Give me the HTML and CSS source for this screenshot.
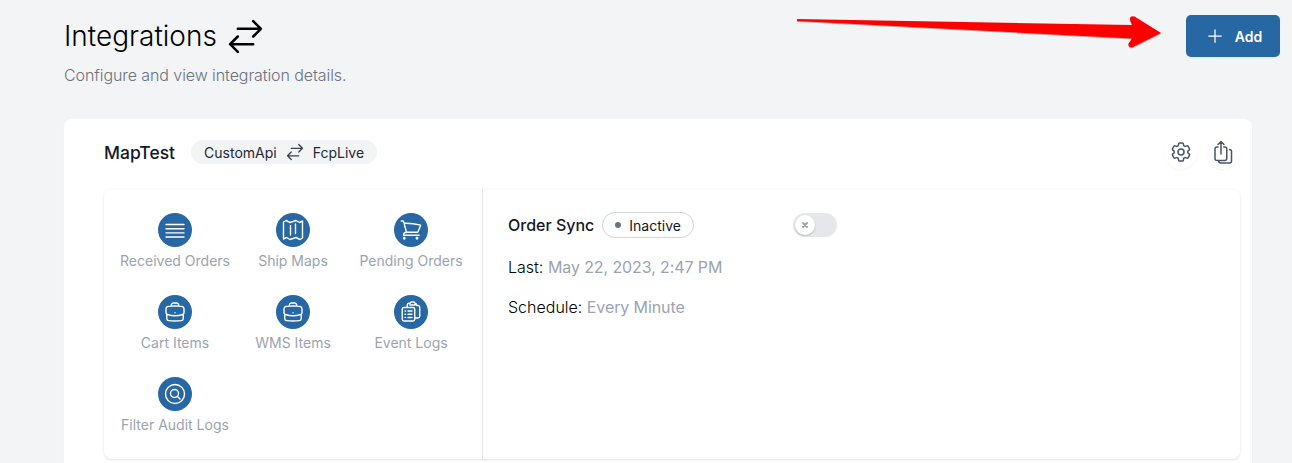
FILE: index.html
```html
<!DOCTYPE html>
<html lang="en">
<head>
  <meta charset="UTF-8">
  <title>Integrations</title>
  <link rel="stylesheet" href="styles.css">
</head>
<body>
  <header class="page-header">
    <div>
      <h1 class="page-title">Integrations
        <svg class="title-icon" viewBox="0 0 24 24" fill="none" stroke="currentColor" stroke-width="1.5" stroke-linecap="round" stroke-linejoin="round"><path d="M7.5 21 3 16.5m0 0L7.5 12M3 16.5h13.5m0-13.5L21 7.5m0 0L16.5 12M21 7.5H7.5"/></svg>
      </h1>
      <p class="page-sub">Configure and view integration details.</p>
    </div>
    <button class="add-btn">
      <svg viewBox="0 0 24 24" fill="none" stroke="currentColor" stroke-width="1.5" stroke-linecap="round"><path d="M12 4.5v15m7.5-7.5h-15"/></svg>
      Add
    </button>
  </header>

  <svg class="red-arrow" viewBox="0 0 370 40">
    <path d="M0 4 335 10 L333 5 Q332.500 0 337.500 1.500 L364 18 L336 32 Q331 33.500 331.500 28.500 L335 23.500 L0 6 Z" fill="#fe0000"/>
  </svg>

  <section class="card">
    <div class="card-head">
      <h2 class="card-title">MapTest</h2>
      <span class="flow-pill">CustomApi
        <svg viewBox="0 0 24 24" fill="none" stroke="currentColor" stroke-width="1.5" stroke-linecap="round" stroke-linejoin="round"><path d="M7.5 21 3 16.500m0 0L7.5 12M3 16.500h13.500m0-13.500L21 7.500m0 0L16.500 12M21 7.500H7.500"/></svg>
        FcpLive</span>
      <div class="card-actions">
        <button class="round-btn">
          <svg viewBox="0 0 24 24" fill="none" stroke="currentColor" stroke-width="1.5" stroke-linecap="round" stroke-linejoin="round"><path d="M9.594 3.940c.09-.542.560-.940 1.110-.940h2.593c.550 0 1.020.398 1.110.940l.213 1.281c.063.374.313.686.645.870.074.040.147.083.220.127.324.196.720.257 1.075.124l1.217-.456a1.125 1.125 0 0 1 1.370.490l1.296 2.247a1.125 1.125 0 0 1-.260 1.431l-1.003.827c-.293.240-.438.613-.431.992a6.759 6.759 0 0 1 0 .255c-.007.378.138.750.430.990l1.005.828c.424.350.534.954.260 1.430l-1.298 2.247a1.125 1.125 0 0 1-1.369.491l-1.217-.456c-.355-.133-.750-.072-1.076.124a6.570 6.570 0 0 1-.220.128c-.331.183-.581.495-.644.869l-.213 1.280c-.090.543-.560.941-1.110.941h-2.594c-.550 0-1.020-.398-1.110-.940l-.213-1.281c-.062-.374-.312-.686-.644-.870a6.520 6.520 0 0 1-.220-.127c-.325-.196-.720-.257-1.076-.124l-1.217.456a1.125 1.125 0 0 1-1.369-.490l-1.297-2.247a1.125 1.125 0 0 1 .260-1.431l1.004-.827c.292-.240.437-.613.430-.992a6.932 6.932 0 0 1 0-.255c.007-.378-.138-.750-.430-.990l-1.004-.828a1.125 1.125 0 0 1-.260-1.430l1.297-2.247a1.125 1.125 0 0 1 1.370-.491l1.216.456c.356.133.751.072 1.076-.124.072-.044.146-.087.220-.128.332-.183.582-.495.644-.869l.214-1.281Z"/><path d="M15 12a3 3 0 1 1-6 0 3 3 0 0 1 6 0Z"/></svg>
        </button>
        <button class="round-btn">
          <svg viewBox="0 0 24 24" fill="none" stroke="currentColor" stroke-width="1.5" stroke-linecap="round" stroke-linejoin="round"><path d="M7 7H6a2 2 0 0 0-2 2v9.500a2 2 0 0 0 2 2h7.750a2 2 0 0 0 2-2V9a2 2 0 0 0-2-2h-1M10 14V1.500m-3 3 3-3 3 3M18.500 9.500a2 2 0 0 1 2 2v9.500a2 2 0 0 1-2 2H10a2.500 2.500 0 0 1-2.500-2.500"/></svg>
        </button>
      </div>
    </div>

    <div class="panel">
      <nav class="tiles">
        <a class="tile"><span class="tile-icon"><svg viewBox="0 0 24 24"><path d="M3 6.500h18M3 10.700h18M3 14.900h18M3 19h18"/></svg></span>Received Orders</a>
        <a class="tile"><span class="tile-icon"><svg viewBox="0 0 24 24"><path d="M9 4.500 5 2.500 2.500 4v17l3-1.500 3.500 2 6-2 4 2 2.500-1.500V3l-3 1.500L15 2.500 9 4.500ZM9.500 7.500v9.500M14.500 6v9.500"/></svg></span>Ship Maps</a>
        <a class="tile"><span class="tile-icon"><svg viewBox="0 0 24 24"><path d="M2.250 3h1.386c.510 0 .955.343 1.087.835l.383 1.437M7.500 14.250a3 3 0 0 0-3 3h15.750m-12.750-3h11.218c1.121-2.300 2.100-4.684 2.924-7.138a60.114 60.114 0 0 0-16.536-1.840M7.500 14.250 5.106 5.272M6 20.250a.750.750 0 1 1-1.500 0 .750.750 0 0 1 1.500 0Zm12.750 0a.750.750 0 1 1-1.500 0 .750.750 0 0 1 1.500 0Z"/></svg></span>Pending Orders</a>
        <a class="tile"><span class="tile-icon"><svg viewBox="0 0 24 24"><path d="M20.250 14.150v4.250c0 1.094-.787 2.036-1.872 2.180-2.087.277-4.216.420-6.378.420s-4.291-.143-6.378-.420c-1.085-.144-1.872-1.086-1.872-2.180v-4.250m16.500 0a2.180 2.180 0 0 0 .750-1.661V8.706c0-1.081-.768-2.015-1.837-2.175a48.114 48.114 0 0 0-3.413-.387m4.500 8.006c-.194.165-.420.295-.673.380A23.978 23.978 0 0 1 12 15.750c-2.648 0-5.195-.429-7.577-1.220a2.016 2.016 0 0 1-.673-.380m0 0A2.180 2.180 0 0 1 3 12.489V8.706c0-1.081.768-2.015 1.837-2.175a48.111 48.111 0 0 1 3.413-.387m7.500 0V5.250A2.250 2.250 0 0 0 13.500 3h-3a2.250 2.250 0 0 0-2.250 2.250v.894m7.500 0a48.667 48.667 0 0 0-7.500 0M12 12.750h.008v.008H12v-.008Z"/></svg></span>Cart Items</a>
        <a class="tile"><span class="tile-icon"><svg viewBox="0 0 24 24"><path d="M20.250 14.150v4.250c0 1.094-.787 2.036-1.872 2.180-2.087.277-4.216.420-6.378.420s-4.291-.143-6.378-.420c-1.085-.144-1.872-1.086-1.872-2.180v-4.250m16.500 0a2.180 2.180 0 0 0 .750-1.661V8.706c0-1.081-.768-2.015-1.837-2.175a48.114 48.114 0 0 0-3.413-.387m4.500 8.006c-.194.165-.420.295-.673.380A23.978 23.978 0 0 1 12 15.750c-2.648 0-5.195-.429-7.577-1.220a2.016 2.016 0 0 1-.673-.380m0 0A2.180 2.180 0 0 1 3 12.489V8.706c0-1.081.768-2.015 1.837-2.175a48.111 48.111 0 0 1 3.413-.387m7.500 0V5.250A2.250 2.250 0 0 0 13.500 3h-3a2.250 2.250 0 0 0-2.250 2.250v.894m7.500 0a48.667 48.667 0 0 0-7.500 0M12 12.750h.008v.008H12v-.008Z"/></svg></span>WMS Items</a>
        <a class="tile"><span class="tile-icon"><svg viewBox="0 0 24 24"><path d="M8.250 7.500V4.900c0-.9.700-1.600 1.500-1.700l1.300-.1M16 3.100c.900.100 1.500.800 1.500 1.700V5.500h1.500c1 0 1.750.800 1.750 1.800v9c0 1-.750 1.700-1.750 1.700H16.500M11 3.500c0-.800.700-1.500 1.500-1.500h2c.800 0 1.500.700 1.500 1.500V5h-5V3.500ZM5 7.500h9c1 0 1.750.800 1.750 1.750v10c0 1-.750 1.750-1.750 1.750H5c-1 0-1.750-.750-1.750-1.750v-10C3.250 8.300 4 7.500 5 7.500ZM9 11h4M9 14.250h4M9 17.500h4M6 11h.500M6 14.250h.500M6 17.500h.500"/></svg></span>Event Logs</a>
        <a class="tile"><span class="tile-icon"><svg viewBox="0 0 24 24"><circle cx="12" cy="12" r="9.500"/><circle cx="11.500" cy="11.500" r="4"/><path d="m14.500 14.500 2.500 2.500"/></svg></span>Filter Audit Logs</a>
      </nav>

      <div class="sync">
        <div class="sync-head">
          <span class="sync-name">Order Sync</span>
          <span class="status-pill"><i class="status-dot"></i>Inactive</span>
          <span class="toggle"><span class="knob">
            <svg viewBox="0 0 12 12" fill="none" stroke="currentColor" stroke-width="2" stroke-linecap="round"><path d="M4 4l4 4M8 4l-4 4"/></svg>
          </span></span>
        </div>
        <p class="sync-line">Last: <span class="muted">May 22, 2023, 2:47 PM</span></p>
        <p class="sync-line">Schedule: <span class="muted">Every Minute</span></p>
      </div>
    </div>
  </section>
</body>
</html>
```

FILE: styles.css
```css
html, body {
  height: 100%;
  overflow: hidden;
}

body {
  margin: 0;
  background: #f3f4f6;
  color: #111827;
  font-family: Inter, "Liberation Sans", sans-serif;
  position: relative;
}

.page-header {
  display: flex;
  justify-content: space-between;
  align-items: flex-start;
  padding: 15px 12px 0 64px;
}

.page-title {
  display: flex;
  align-items: center;
  gap: 8px;
  margin: 0;
  height: 42px;
  font-size: 28px;
  font-weight: 300;
  color: #000;
}

.title-icon {
  width: 41px;
  height: 41px;
}

.page-sub {
  margin: 8px 0 0;
  font-size: 16px;
  line-height: 20px;
  font-weight: 300;
  letter-spacing: -0.08px;
  color: #6b7280;
}

.add-btn {
  display: flex;
  align-items: center;
  justify-content: center;
  gap: 9.500px;
  width: 94px;
  height: 42px;
  padding: 0 0 0 1.500px;
  border: none;
  border-radius: 5px;
  background: #2767a3;
  color: #fff;
  font-family: inherit;
  font-size: 14px;
  font-weight: 600;
  box-shadow: 0 1px 2px rgba(0, 0, 0, 0.05);
}

.add-btn svg {
  width: 20px;
  height: 20px;
}

.red-arrow {
  position: absolute;
  left: 797px;
  top: 15px;
  width: 370px;
  height: 40px;
  filter: drop-shadow(0 1px 0 rgba(90, 90, 90, 0.45));
}

.card {
  margin: 34px 40px 0 64px;
  padding: 20px 12px 40px 40px;
  background: #fff;
  border-radius: 8px;
  box-shadow: 0 1px 2px rgba(0, 0, 0, 0.04);
}

.card-head {
  display: flex;
  align-items: center;
  height: 26px;
}

.card-title {
  margin: 0 16px 0 0;
  font-size: 17.500px;
  font-weight: 500;
}

.flow-pill {
  display: flex;
  align-items: center;
  gap: 9px;
  height: 24px;
  padding: 0 13px;
  border-radius: 12px;
  background: #f3f4f6;
  color: #1f2937;
  font-size: 14px;
}

.flow-pill svg {
  width: 20px;
  height: 20px;
  margin: 0 -1px;
  color: #374151;
}

.card-actions {
  display: flex;
  gap: 8px;
  margin-left: auto;
}

.round-btn {
  display: flex;
  align-items: center;
  justify-content: center;
  width: 34px;
  height: 34px;
  padding: 0;
  border: none;
  border-radius: 50%;
  background: #fff;
  color: #4b5563;
  box-shadow: 0 1px 2px rgba(0, 0, 0, 0.04);
}

.round-btn svg {
  width: 24px;
  height: 24px;
}

.panel {
  display: flex;
  margin-top: 24px;
  height: 270px;
  border-radius: 8px;
  background: #fff;
  box-shadow: 0 1px 3px rgba(0, 0, 0, 0.12);
}

.tiles {
  display: grid;
  grid-template-columns: repeat(3, 118px);
  grid-auto-rows: 82px;
  box-sizing: border-box;
  width: 379px;
  padding: 24px 12px 0;
  border-right: 1px solid #e5e7eb;
}

.tile {
  display: flex;
  flex-direction: column;
  align-items: center;
  gap: 4px;
  color: #9ca3af;
  font-size: 14px;
  line-height: 20px;
  white-space: nowrap;
}

.tile-icon {
  display: flex;
  align-items: center;
  justify-content: center;
  width: 34px;
  height: 34px;
  border-radius: 50%;
  background: #2767a3;
}

.tile-icon svg {
  width: 24px;
  height: 24px;
  fill: none;
  stroke: #fff;
  stroke-width: 1.4;
  stroke-linecap: round;
  stroke-linejoin: round;
}

.sync {
  flex: 1;
  padding: 23px 25px;
}

.sync-head {
  display: flex;
  align-items: center;
  height: 26px;
}

.sync-name {
  font-size: 16px;
  font-weight: 500;
}

.status-pill {
  display: flex;
  align-items: center;
  gap: 8px;
  box-sizing: border-box;
  height: 26px;
  margin-left: 8px;
  padding: 0 12px;
  border: 1px solid #d1d5db;
  border-radius: 13px;
  font-size: 14px;
  color: #111827;
}

.status-dot {
  width: 6px;
  height: 6px;
  border-radius: 50%;
  background: #6b7280;
}

.toggle {
  display: flex;
  align-items: center;
  width: 44px;
  height: 24px;
  margin-left: 99px;
  border-radius: 12px;
  background: #e5e7eb;
}

.knob {
  display: flex;
  align-items: center;
  justify-content: center;
  width: 20px;
  height: 20px;
  margin-left: 2px;
  border-radius: 50%;
  background: #fff;
  color: #9ca3af;
  box-shadow: 0 1px 2px rgba(0, 0, 0, 0.2);
}

.knob svg {
  width: 12px;
  height: 12px;
}

.sync-line {
  margin: 16px 0 0;
  font-size: 16px;
  line-height: 24px;
  font-weight: 300;
  color: #000;
}

.sync-head + .sync-line {
  margin-top: 17px;
}

.muted {
  color: #9ca3af;
  font-weight: 400;
  letter-spacing: -0.1px;
}
```
